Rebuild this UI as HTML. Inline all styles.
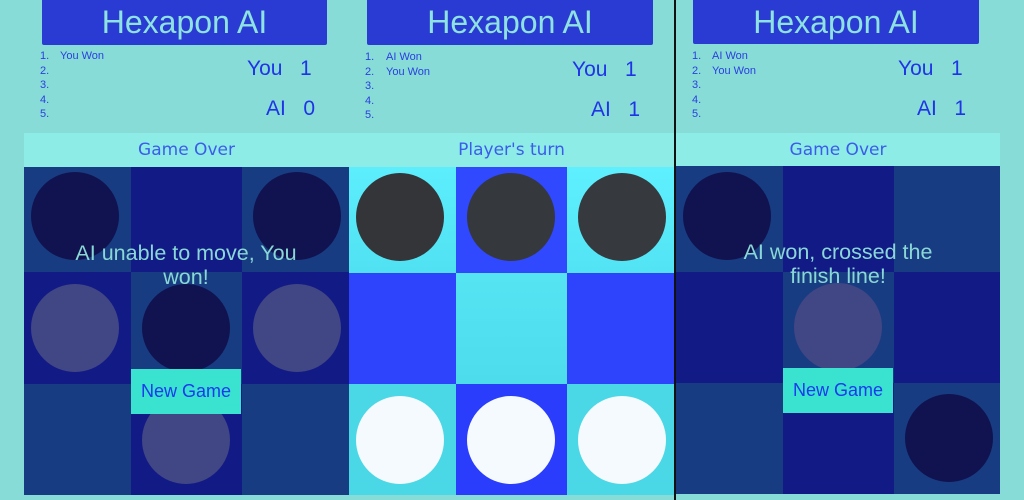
<!DOCTYPE html>
<html><head><meta charset="utf-8"><style>
*{margin:0;padding:0;box-sizing:border-box}
body{width:1024px;height:500px;background:#88dcd7;position:relative;overflow:hidden;font-family:"Liberation Sans","DejaVu Sans",sans-serif}
.a{position:absolute}
.title{background:#2a3bd4;color:#8ee2e0;font-size:32px;text-align:center;line-height:44px;border-radius:0 0 2px 2px}
.list{color:#2a3ee0;font-size:11px;line-height:14.5px}
.score{color:#1f34e6;font-size:21px}
.hdr{background:#8eece7;color:#3b5cea;font-family:"DejaVu Sans",sans-serif;font-size:17px;text-align:center;line-height:34px}
.c{position:absolute}
.p{position:absolute;border-radius:50%;width:88px;height:88px}
.msg{color:#8ad8d6;font-size:21.5px;text-align:center;line-height:24px}
.btn{background:#3ae2d0;color:#1a3aee;font-size:18px;text-align:center;line-height:45px}
</style></head><body>

<!-- LEFT -->
<div class="a title" style="left:42px;top:0;width:285px;height:45px">Hexapon AI</div>
<div class="a list" style="left:40px;top:49px">1.<br>2.<br>3.<br>4.<br>5.</div>
<div class="a list" style="left:60px;top:49px">You Won</div>
<div class="a score" style="left:247px;top:57px">You&nbsp;&nbsp;&nbsp;1</div>
<div class="a score" style="left:266px;top:97px">AI&nbsp;&nbsp;&nbsp;0</div>
<div class="a hdr" style="left:24px;top:133px;width:325px;height:34px">Game Over</div>
<div class="c" style="left:24px;top:167px;width:107px;height:105px;background:#183c82"></div>
<div class="c" style="left:131px;top:167px;width:111px;height:105px;background:#121a86"></div>
<div class="c" style="left:242px;top:167px;width:107px;height:105px;background:#183c82"></div>
<div class="c" style="left:24px;top:272px;width:107px;height:112px;background:#121a86"></div>
<div class="c" style="left:131px;top:272px;width:111px;height:112px;background:#183c82"></div>
<div class="c" style="left:242px;top:272px;width:107px;height:112px;background:#121a86"></div>
<div class="c" style="left:24px;top:384px;width:107px;height:111px;background:#183c82"></div>
<div class="c" style="left:131px;top:384px;width:111px;height:111px;background:#121a86"></div>
<div class="c" style="left:242px;top:384px;width:107px;height:111px;background:#183c82"></div>
<div class="p" style="left:31px;top:172px;background:#10134f"></div>
<div class="p" style="left:253px;top:172px;background:#10134f"></div>
<div class="p" style="left:31px;top:284px;background:#414684"></div>
<div class="p" style="left:142px;top:284px;background:#10134f"></div>
<div class="p" style="left:253px;top:284px;background:#414684"></div>
<div class="p" style="left:142px;top:396px;background:#414684"></div>
<div class="a msg" style="left:30px;top:241px;width:312px">AI unable to move, You<br>won!</div>
<div class="a btn" style="left:131px;top:369px;width:110px;height:45px">New Game</div>

<!-- MIDDLE -->
<div class="a title" style="left:367px;top:0;width:286px;height:45px">Hexapon AI</div>
<div class="a list" style="left:365px;top:50px">1.<br>2.<br>3.<br>4.<br>5.</div>
<div class="a list" style="left:386px;top:50px">AI Won<br>You Won</div>
<div class="a score" style="left:572px;top:58px">You&nbsp;&nbsp;&nbsp;1</div>
<div class="a score" style="left:591px;top:98px">AI&nbsp;&nbsp;&nbsp;1</div>
<div class="a hdr" style="left:349px;top:133px;width:325px;height:34px">Player's turn</div>
<div class="c" style="left:349px;top:167px;width:107px;height:106px;background:linear-gradient(#5ceefc,#50e2f2)"></div>
<div class="c" style="left:456px;top:167px;width:111px;height:106px;background:#3048fe"></div>
<div class="c" style="left:567px;top:167px;width:107px;height:106px;background:linear-gradient(#5ef0fe,#52e4f4)"></div>
<div class="c" style="left:349px;top:273px;width:107px;height:111px;background:#2e44fc"></div>
<div class="c" style="left:456px;top:273px;width:111px;height:111px;background:linear-gradient(#54e4f2,#4cdcec)"></div>
<div class="c" style="left:567px;top:273px;width:107px;height:111px;background:#2e44fc"></div>
<div class="c" style="left:349px;top:384px;width:107px;height:111px;background:#4ad8e6"></div>
<div class="c" style="left:456px;top:384px;width:111px;height:111px;background:#2a3cfc"></div>
<div class="c" style="left:567px;top:384px;width:107px;height:111px;background:#4ad8e6"></div>
<div class="p" style="left:356px;top:173px;background:#333538"></div>
<div class="p" style="left:467px;top:173px;background:#35383c"></div>
<div class="p" style="left:578px;top:173px;background:#36393d"></div>
<div class="p" style="left:356px;top:396px;background:#f5faff"></div>
<div class="p" style="left:467px;top:396px;background:#f5faff"></div>
<div class="p" style="left:578px;top:396px;background:#f5faff"></div>

<div class="a" style="left:674px;top:0;width:2px;height:500px;background:#111"></div>

<!-- RIGHT -->
<div class="a title" style="left:693px;top:0;width:286px;height:44px">Hexapon AI</div>
<div class="a list" style="left:692px;top:49px">1.<br>2.<br>3.<br>4.<br>5.</div>
<div class="a list" style="left:712px;top:49px">AI Won<br>You Won</div>
<div class="a score" style="left:898px;top:57px">You&nbsp;&nbsp;&nbsp;1</div>
<div class="a score" style="left:917px;top:97px">AI&nbsp;&nbsp;&nbsp;1</div>
<div class="a hdr" style="left:676px;top:133px;width:324px;height:33px">Game Over</div>
<div class="c" style="left:676px;top:166px;width:107px;height:106px;background:#183c82"></div>
<div class="c" style="left:783px;top:166px;width:111px;height:106px;background:#121a86"></div>
<div class="c" style="left:894px;top:166px;width:106px;height:106px;background:#183c82"></div>
<div class="c" style="left:676px;top:272px;width:107px;height:111px;background:#121a86"></div>
<div class="c" style="left:783px;top:272px;width:111px;height:111px;background:#183c82"></div>
<div class="c" style="left:894px;top:272px;width:106px;height:111px;background:#121a86"></div>
<div class="c" style="left:676px;top:383px;width:107px;height:111px;background:#183c82"></div>
<div class="c" style="left:783px;top:383px;width:111px;height:111px;background:#121a86"></div>
<div class="c" style="left:894px;top:383px;width:106px;height:111px;background:#183c82"></div>
<div class="p" style="left:683px;top:172px;background:#10134f"></div>
<div class="p" style="left:794px;top:283px;background:#414684"></div>
<div class="p" style="left:905px;top:394px;background:#10134f"></div>
<div class="a msg" style="left:688px;top:240px;width:300px">AI won, crossed the<br>finish line!</div>
<div class="a btn" style="left:783px;top:368px;width:110px;height:45px">New Game</div>
</body></html>
